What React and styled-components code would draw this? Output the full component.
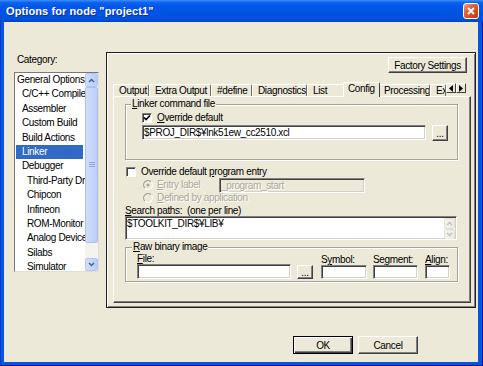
import React from 'react'
import styled, { createGlobalStyle } from 'styled-components'

const UI = '"Liberation Sans", Arial, sans-serif'

const GlobalStyle = createGlobalStyle`
  html, body {
    margin: 0;
    padding: 0;
    background: #ece9d8;
  }
  body {
    font-family: ${UI};
    font-size: 10px;
    letter-spacing: -0.35px;
    color: #000;
    overflow: hidden;
  }
  * { box-sizing: border-box; }
`

// window chrome
const Window = styled.div`
  width: 483px;
  height: 366px;
  display: flex;
  flex-direction: column;
  background: #0554e3;
  box-shadow: inset 1px 0 0 #0a3bc4, inset -1px 0 0 #00138c, inset 0 -1px 0 #00138c;
`

const TitleBar = styled.div`
  height: 22px;
  flex: none;
  display: flex;
  align-items: center;
  justify-content: space-between;
  padding: 0 4px 0 6px;
  background: linear-gradient(to bottom, #3d8ff8 0%, #0b62f0 12%, #0057ea 30%, #0054e3 65%, #0050dd 88%, #0443c4 100%);
`

const Title = styled.span`
  color: #fff;
  font-family: "Liberation Sans", Arial, sans-serif;
  font-weight: bold;
  font-size: 11px;
  letter-spacing: 0.1px;
  text-shadow: 1px 1px 0 #0c2fa8;
`

const CloseButton = styled.span`
  width: 16px;
  height: 16px;
  display: flex;
  align-items: center;
  justify-content: center;
  border: 1px solid #fff;
  border-radius: 3px;
  background: linear-gradient(135deg, #eba088 0%, #df643f 35%, #d04a24 70%, #b9361a 100%);
`

const Body = styled.div`
  flex: 1;
  margin: 0 5px 4px 4px;
  background: #ece9d8;
  display: flex;
  flex-direction: column;
`

const MainRow = styled.div`
  display: flex;
  align-items: flex-start;
  padding: 30px 3px 0 10px;
`

// category list
const CategoryColumn = styled.div`
  width: 85px;
  margin-right: 7px;
  padding-top: 2px;
  display: flex;
  flex-direction: column;
`

const Caption = styled.div`
  line-height: 12px;
  padding-left: 3px;
  margin-bottom: 6px;
`

const ListBox = styled.div`
  height: 200px;
  display: flex;
  background: #fff;
  border: 1px solid;
  border-color: #7a7a72 #e0ded4 #e0ded4 #7a7a72;
`

const ListItems = styled.div`
  flex: 1;
  overflow: hidden;
`

const ListItem = styled.div`
  height: 14.4px;
  line-height: 14.4px;
  margin: 0 2px 0 1px;
  padding-left: ${p => 1 + p.$level * 5}px;
  white-space: nowrap;
  background: ${p => (p.$selected ? '#316ac5' : 'transparent')};
  color: ${p => (p.$selected ? '#fff' : '#000')};
`

const ScrollBar = styled.div`
  width: 13px;
  flex: none;
  display: flex;
  flex-direction: column;
  background: #f4f3ee;
`

const ScrollArrow = styled.div`
  height: ${p => p.$h}px;
  flex: none;
  display: flex;
  align-items: center;
  justify-content: center;
  border: 1px solid ${p => (p.$disabled ? '#e2e0d4' : '#b4c8f6')};
  border-radius: 2px;
  background: ${p =>
    p.$disabled
      ? 'linear-gradient(to right, #f4f3ee, #eceae0)'
      : 'linear-gradient(to right, #d2dffc, #b9cdf8)'};
`

const ScrollThumb = styled.div`
  height: ${p => p.$h}px;
  flex: none;
  display: flex;
  align-items: center;
  justify-content: center;
  border: 1px solid #a9c0f3;
  border-radius: 2px;
  background: linear-gradient(to right, #d0ddfc, #bccff9);
`

// right frame
const OptionsFrame = styled.div`
  flex: 1;
  height: 256px;
  display: flex;
  flex-direction: column;
  padding: 4px 4px 4px 6px;
  border: 1px solid #1e1e1e;
  box-shadow: inset 1px 1px 0 #fff, inset -1px -1px 0 #808080;
`

const FactoryRow = styled.div`
  display: flex;
  justify-content: flex-end;
  padding-right: 4px;
`

const PushButton = styled.div`
  width: ${p => p.$w}px;
  height: ${p => p.$h}px;
  flex: none;
  display: flex;
  align-items: center;
  justify-content: center;
  line-height: 11px;
  white-space: nowrap;
  background: #ece9d8;
  border: 1px solid;
  border-color: ${p => (p.$default ? '#000' : '#fff #404040 #404040 #fff')};
  box-shadow: ${p =>
    p.$default
      ? 'inset 1px 1px 0 #fff, inset -1px -1px 0 #404040, inset -2px -2px 0 #808080'
      : 'inset -1px -1px 0 #808080'};
  align-self: ${p => p.$align || 'auto'};
  margin-left: ${p => p.$ml || 0}px;
`

const TabStrip = styled.div`
  display: flex;
  align-items: flex-end;
  height: 15px;
  margin-top: 9px;
  margin-bottom: -1px;
  position: relative;
  z-index: 1;
`

const Tab = styled.div`
  flex: none;
  width: ${p => p.$w}px;
  height: ${p => (p.$active ? 15 : 12)}px;
  margin: ${p => (p.$active ? '0 -2px' : '0 0 1px 0')};
  padding-left: ${p => (p.$active ? 4 : 5)}px;
  line-height: 11px;
  white-space: nowrap;
  overflow: hidden;
  background: #ece9d8;
  border-top: 1px solid #fff;
  border-left: 1px solid #fff;
  border-right: 1px solid ${p => (p.$active ? '#404040' : '#6f6e66')};
  border-radius: 2px 2px 0 0;
  position: relative;
  z-index: ${p => (p.$active ? 2 : 1)};
`

const TabScroller = styled.div`
  display: flex;
  align-self: flex-start;
  margin-top: 1px;
  margin-right: 4px;
  position: relative;
  z-index: 3;
`

const TabArrow = styled.div`
  width: 10px;
  height: 10px;
  display: flex;
  align-items: center;
  justify-content: center;
  background: #ece9d8;
  border: 1px solid;
  border-color: #fff #404040 #404040 #fff;
`

const TabPage = styled.div`
  flex: 1;
  display: flex;
  flex-direction: column;
  padding: 7px 12px 0 11px;
  border: 1px solid;
  border-color: #fff #404040 #404040 #fff;
  box-shadow: inset -1px -1px 0 #808080;
`

const Group = styled.div`
  display: flex;
  flex-direction: column;
  border: 1px solid #a5a497;
  box-shadow: 1px 1px 0 #fff, inset 1px 1px 0 #fff;
  padding: ${p => p.$pad};
  margin-top: ${p => p.$mt || 0}px;
`

const Legend = styled.span`
  align-self: flex-start;
  margin: -7px 0 0 ${p => p.$offset}px;
  padding: 0 1px;
  line-height: 12px;
  background: #ece9d8;
`

const OptionRow = styled.div`
  display: flex;
  align-items: center;
  height: ${p => p.$h || 12}px;
  line-height: 12px;
  margin-top: ${p => p.$mt || 0}px;
  padding-left: ${p => p.$indent || 0}px;
  white-space: nowrap;
  color: ${p => (p.$disabled ? '#aca899' : '#000')};
  text-shadow: ${p => (p.$disabled ? '1px 1px 0 #fff' : 'none')};
`

const CheckBox = styled.span`
  width: 10px;
  height: 10px;
  flex: none;
  margin-right: 5px;
  display: flex;
  align-items: center;
  justify-content: center;
  background: #fff;
  border: 1px solid;
  border-color: #808080 #fff #fff #808080;
  box-shadow: inset 1px 1px 0 #404040;
`

const OptionLabel = styled.span`
  width: ${p => (p.$w ? `${p.$w}px` : 'auto')};
  flex: none;
`

const InputRow = styled.div`
  display: flex;
  align-items: flex-start;
  margin-top: 1px;
`

const TextField = styled.div`
  width: ${p => p.$w}px;
  height: ${p => p.$h || 15}px;
  flex: none;
  display: flex;
  padding-left: 1px;
  line-height: 11px;
  white-space: nowrap;
  overflow: hidden;
  background: ${p => (p.$disabled ? '#ece9d8' : '#fff')};
  color: ${p => (p.$disabled ? '#aca899' : '#000')};
  border: 1px solid;
  border-color: #808080 #fff #fff #808080;
  box-shadow: inset 1px 1px 0 #404040, inset -1px -1px 0 #d4d0c8;
`

const FieldText = styled.span`
  flex: 1;
  padding-top: ${p => p.$pt || 1}px;
`

const SpinColumn = styled.div`
  width: 11px;
  display: flex;
  flex-direction: column;
  margin: 1px 1px 1px 0;
`

const PlainLabel = styled.div`
  line-height: 11px;
  margin-top: ${p => p.$mt || 0}px;
  white-space: nowrap;
`

const FieldsRow = styled.div`
  display: flex;
  align-items: flex-end;
`

const FieldColumn = styled.div`
  display: flex;
  flex-direction: column;
  margin-left: ${p => p.$ml || 0}px;
`

const Footer = styled.div`
  display: flex;
  justify-content: flex-end;
  gap: 5px;
  margin-top: 28px;
  padding-right: 60px;
`

const Key = styled.u`
  text-decoration: underline;
  text-underline-offset: 1px;
`

// small drawings
const CheckMark = () => (
  <svg width="8" height="8" viewBox="0 0 8 8">
    <path d="M1 3.5 L3 5.5 L7 1.5" stroke="#000" strokeWidth="1.6" fill="none" />
  </svg>
)

const Radio = ({ checked }) => (
  <svg width="10" height="10" viewBox="0 0 10 10" style={{ flex: 'none', marginRight: 4 }}>
    <circle cx="5" cy="5" r="4.3" fill="#ece9d8" />
    <path d="M1.9 8.1 A4.3 4.3 0 0 1 8.1 1.9" stroke="#a09f96" strokeWidth="1.1" fill="none" />
    <path d="M8.1 1.9 A4.3 4.3 0 0 1 1.9 8.1" stroke="#fff" strokeWidth="1.1" fill="none" />
    {checked && <circle cx="5" cy="5" r="1.6" fill="#aca899" />}
  </svg>
)

const Chevron = ({ up, color = '#4d6185' }) => (
  <svg width="7" height="5" viewBox="0 0 7 5">
    <path d={up ? 'M1 4 L3.5 1.5 L6 4' : 'M1 1 L3.5 3.5 L6 1'} stroke={color} strokeWidth="1.5" fill="none" />
  </svg>
)

const Grip = () => (
  <svg width="6" height="6" viewBox="0 0 6 6">
    <path d="M0 0.5 H6 M0 2.5 H6 M0 4.5 H6" stroke="#8fa7dc" strokeWidth="1" />
  </svg>
)

const Triangle = ({ left }) => (
  <svg width="4" height="7" viewBox="0 0 4 7">
    <path d={left ? 'M4 0 L0 3.5 L4 7 Z' : 'M0 0 L4 3.5 L0 7 Z'} fill="#000" />
  </svg>
)

const categories = [
  { name: 'General Options', level: 0 },
  { name: 'C/C++ Compiler', level: 1 },
  { name: 'Assembler', level: 1 },
  { name: 'Custom Build', level: 1 },
  { name: 'Build Actions', level: 1 },
  { name: 'Linker', level: 1, selected: true },
  { name: 'Debugger', level: 1 },
  { name: 'Third-Party Driver', level: 2 },
  { name: 'Chipcon', level: 2 },
  { name: 'Infineon', level: 2 },
  { name: 'ROM-Monitor', level: 2 },
  { name: 'Analog Devices', level: 2 },
  { name: 'Silabs', level: 2 },
  { name: 'Simulator', level: 2 },
]

const tabs = [
  { label: 'Output', w: 36 },
  { label: 'Extra Output', w: 62 },
  { label: '#define', w: 41 },
  { label: 'Diagnostics', w: 55 },
  { label: 'List', w: 38 },
  { label: 'Config', w: 37, active: true },
  { label: 'Processing', w: 52 },
  { label: 'Extra Options', w: 16 },
]

function App() {
  return (
    <>
      <GlobalStyle />
      <Window>
        <TitleBar>
          <Title>Options for node "project1"</Title>
          <CloseButton>
            <svg width="8" height="8" viewBox="0 0 8 8">
              <path d="M1 1 L7 7 M7 1 L1 7" stroke="#fff" strokeWidth="1.8" />
            </svg>
          </CloseButton>
        </TitleBar>
        <Body>
          <MainRow>
            <CategoryColumn>
              <Caption>Category:</Caption>
              <ListBox>
                <ListItems>
                  {categories.map(c => (
                    <ListItem key={c.name} $level={c.level} $selected={c.selected}>
                      {c.name}
                    </ListItem>
                  ))}
                </ListItems>
                <ScrollBar>
                  <ScrollArrow $h={14}>
                    <Chevron up />
                  </ScrollArrow>
                  <ScrollThumb $h={156}>
                    <Grip />
                  </ScrollThumb>
                  <div style={{ flex: 1 }} />
                  <ScrollArrow $h={13}>
                    <Chevron />
                  </ScrollArrow>
                </ScrollBar>
              </ListBox>
            </CategoryColumn>

            <OptionsFrame>
              <FactoryRow>
                <PushButton $w={79} $h={16}>Factory Settings</PushButton>
              </FactoryRow>
              <TabStrip>
                {tabs.map(t => (
                  <Tab key={t.label} $w={t.w} $active={t.active}>
                    {t.label}
                  </Tab>
                ))}
                <TabScroller>
                  <TabArrow>
                    <Triangle left />
                  </TabArrow>
                  <TabArrow>
                    <Triangle />
                  </TabArrow>
                </TabScroller>
              </TabStrip>
              <TabPage>
                <Group $pad="0 9px 18px 16px">
                  <Legend $offset={-11}>
                    <Key>L</Key>inker command file
                  </Legend>
                  <OptionRow $mt={2}>
                    <CheckBox>
                      <CheckMark />
                    </CheckBox>
                    <span>
                      <Key>O</Key>verride default
                    </span>
                  </OptionRow>
                  <InputRow>
                    <TextField $w={284}>
                      <FieldText $pt={1}>$PROJ_DIR$¥lnk51ew_cc2510.xcl</FieldText>
                    </TextField>
                    <PushButton $w={16} $h={16} $ml={6}>...</PushButton>
                  </InputRow>
                </Group>

                <OptionRow $mt={6} $indent={1}>
                  <CheckBox />
                  <span>
                    Override default <Key>p</Key>rogram entry
                  </span>
                </OptionRow>
                <OptionRow $h={14} $indent={18} $disabled>
                  <Radio checked />
                  <OptionLabel $w={62}>
                    <Key>E</Key>ntry label
                  </OptionLabel>
                  <TextField $w={146} $disabled>
                    <FieldText $pt={1}>_program_start</FieldText>
                  </TextField>
                </OptionRow>
                <OptionRow $indent={18} $disabled>
                  <Radio />
                  <span>
                    <Key>D</Key>efined by application
                  </span>
                </OptionRow>
                <PlainLabel $mt={1}>
                  <Key>S</Key>earch paths:&nbsp;&nbsp;(one per line)
                </PlainLabel>
                <TextField $w={332} $h={24}>
                  <FieldText $pt={1}>$TOOLKIT_DIR$¥LIB¥</FieldText>
                  <SpinColumn>
                    <ScrollArrow $h={11} $disabled>
                      <Chevron up color="#c4c2b6" />
                    </ScrollArrow>
                    <ScrollArrow $h={11} $disabled>
                      <Chevron color="#c4c2b6" />
                    </ScrollArrow>
                  </SpinColumn>
                </TextField>

                <Group $pad="0 6px 2px 11px" $mt={7}>
                  <Legend $offset={-5}>
                    <Key>R</Key>aw binary image
                  </Legend>
                  <FieldsRow>
                    <FieldColumn>
                      <PlainLabel>
                        <Key>F</Key>ile:
                      </PlainLabel>
                      <TextField $w={154} />
                    </FieldColumn>
                    <PushButton $w={16} $h={14} $ml={6}>...</PushButton>
                    <FieldColumn $ml={8}>
                      <PlainLabel>
                        S<Key>y</Key>mbol:
                      </PlainLabel>
                      <TextField $w={46} $h={14} />
                    </FieldColumn>
                    <FieldColumn $ml={6}>
                      <PlainLabel>
                        Se<Key>g</Key>ment:
                      </PlainLabel>
                      <TextField $w={45} $h={14} />
                    </FieldColumn>
                    <FieldColumn $ml={7}>
                      <PlainLabel>
                        <Key>A</Key>lign:
                      </PlainLabel>
                      <TextField $w={25} $h={14} />
                    </FieldColumn>
                  </FieldsRow>
                </Group>
              </TabPage>
            </OptionsFrame>
          </MainRow>

          <Footer>
            <PushButton $w={60} $h={18} $default>OK</PushButton>
            <PushButton $w={60} $h={18}>Cancel</PushButton>
          </Footer>
        </Body>
      </Window>
    </>
  )
}

export default App
